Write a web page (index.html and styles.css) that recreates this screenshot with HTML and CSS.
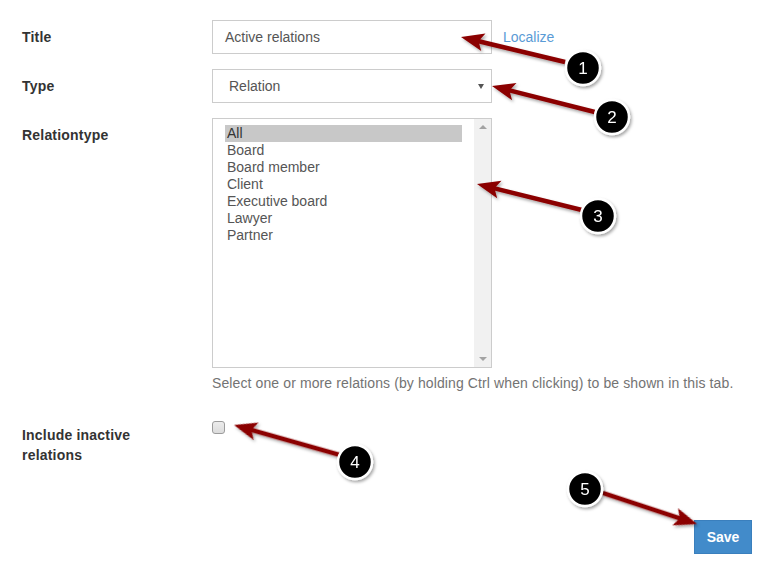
FILE: index.html
```html
<!DOCTYPE html>
<html>
<head>
<meta charset="utf-8">
<link rel="stylesheet" href="styles.css">
</head>
<body>
<div class="page">
  <form class="form">
    <div class="row">
      <div class="label">Title</div>
      <div class="field field-inline">
        <div class="input">Active relations</div>
        <a class="link" href="#">Localize</a>
      </div>
    </div>
    <div class="row">
      <div class="label">Type</div>
      <div class="field">
        <div class="input select">Relation<span class="caret"></span></div>
      </div>
    </div>
    <div class="row">
      <div class="label">Relationtype</div>
      <div class="field">
        <div class="listbox">
          <div class="options">
            <div class="option selected">All</div>
            <div class="option">Board</div>
            <div class="option">Board member</div>
            <div class="option">Client</div>
            <div class="option">Executive board</div>
            <div class="option">Lawyer</div>
            <div class="option">Partner</div>
          </div>
          <div class="scrollbar">
            <span class="sb-up"></span>
            <span class="sb-down"></span>
          </div>
        </div>
        <div class="help">Select one or more relations (by holding Ctrl when clicking) to be shown in this tab.</div>
      </div>
    </div>
    <div class="row row-check">
      <div class="label">Include inactive<br>relations</div>
      <div class="field">
        <span class="checkbox"></span>
      </div>
    </div>
    <div class="actions">
      <button type="button" class="btn">Save</button>
    </div>
  </form>

  <svg class="overlay" width="782" height="585" viewBox="0 0 782 585">
    <defs>
      <filter id="sh" x="-30%" y="-30%" width="160%" height="160%">
        <feDropShadow dx="1.5" dy="2" stdDeviation="1.5" flood-color="#000" flood-opacity="0.35"/>
      </filter>
    </defs>
    <g filter="url(#sh)">
      <g transform="translate(461 37) rotate(13.5)"><line x1="15" y1="0" x2="107" y2="0" stroke="#8b0000" stroke-width="4.5"/><path d="M0,0 L23,-9 L18,0 L23,9 Z" fill="#8b0000"/></g>
      <g transform="translate(492 86) rotate(14.2)"><line x1="15" y1="0" x2="106" y2="0" stroke="#8b0000" stroke-width="4.5"/><path d="M0,0 L23,-9 L18,0 L23,9 Z" fill="#8b0000"/></g>
      <g transform="translate(477 184) rotate(13.9)"><line x1="15" y1="0" x2="108" y2="0" stroke="#8b0000" stroke-width="4.5"/><path d="M0,0 L23,-9 L18,0 L23,9 Z" fill="#8b0000"/></g>
      <g transform="translate(234 425) rotate(15.8)"><line x1="15" y1="0" x2="110" y2="0" stroke="#8b0000" stroke-width="4.5"/><path d="M0,0 L23,-9 L18,0 L23,9 Z" fill="#8b0000"/></g>
      <g transform="translate(697 524) rotate(198.25)"><line x1="15" y1="0" x2="99" y2="0" stroke="#8b0000" stroke-width="4.5"/><path d="M0,0 L23,-9 L18,0 L23,9 Z" fill="#8b0000"/></g>
    </g>
    <g class="badges" filter="url(#sh)">
      <circle cx="583" cy="68" r="17" fill="#000" stroke="#fff" stroke-width="2.5"/>
      <circle cx="612" cy="117" r="17" fill="#000" stroke="#fff" stroke-width="2.5"/>
      <circle cx="598" cy="216" r="17" fill="#000" stroke="#fff" stroke-width="2.5"/>
      <circle cx="355" cy="462" r="17" fill="#000" stroke="#fff" stroke-width="2.5"/>
      <circle cx="585" cy="489" r="17" fill="#000" stroke="#fff" stroke-width="2.5"/>
    </g>
    <g class="nums">
      <text x="583" y="74">1</text>
      <text x="612" y="123">2</text>
      <text x="598" y="222">3</text>
      <text x="355" y="468">4</text>
      <text x="585" y="495">5</text>
    </g>
  </svg>
</div>
</body>
</html>
```
FILE: styles.css
```css
html, body {
  margin: 0;
  padding: 0;
  background: #fff;
}
body {
  font-family: "Liberation Sans", Arial, sans-serif;
  font-size: 14px;
  color: #333;
}
.page {
  position: relative;
  width: 782px;
  height: 585px;
  overflow: hidden;
}
.form {
  padding: 20px 0 0 22px;
  margin: 0;
}
.row {
  display: flex;
  margin-bottom: 15px;
}
.label {
  width: 190px;
  flex: none;
  padding-top: 7px;
  line-height: 20px;
  font-weight: bold;
  font-size: 14px;
  letter-spacing: 0.2px;
  color: #333;
}
.field {
  flex: none;
}
.field-inline {
  display: flex;
  align-items: center;
  gap: 11px;
}
.input {
  box-sizing: border-box;
  width: 280px;
  height: 34px;
  border: 1px solid #ccc;
  padding: 0 12px;
  line-height: 32px;
  color: #555;
  font-size: 14px;
  background: #fff;
}
.select {
  position: relative;
  padding-left: 16px;
}
.caret {
  position: absolute;
  right: 7px;
  top: 14px;
  width: 0;
  height: 0;
  border-left: 3px solid transparent;
  border-right: 3px solid transparent;
  border-top: 5px solid #555;
}
.link {
  color: #5a9bd6;
  text-decoration: none;
  font-size: 14px;
}
.listbox {
  box-sizing: border-box;
  width: 280px;
  height: 250px;
  border: 1px solid #ccc;
  display: flex;
  background: #fff;
}
.options {
  flex: 1;
  padding: 6px 12px 0 12px;
}
.option {
  line-height: 17px;
  height: 17px;
  padding-left: 2px;
  color: #555;
  font-size: 14px;
}
.option.selected {
  background: #c8c8c8;
  color: #333;
}
.scrollbar {
  position: relative;
  width: 17px;
  flex: none;
  background: #f1f1f1;
}
.sb-up, .sb-down {
  position: absolute;
  left: 5px;
  width: 0;
  height: 0;
  border-left: 4px solid transparent;
  border-right: 4px solid transparent;
}
.sb-up {
  top: 6px;
  border-bottom: 4px solid #a3a3a3;
}
.sb-down {
  bottom: 6px;
  border-top: 4px solid #a3a3a3;
}
.help {
  margin-top: 5px;
  line-height: 20px;
  color: #737373;
  font-size: 14px;
  letter-spacing: 0.11px;
  white-space: nowrap;
}
.row-check {
  margin-top: 32px;
}
.row-check .label {
  padding-top: 0;
}
.checkbox {
  display: block;
  box-sizing: border-box;
  width: 13px;
  height: 13px;
  margin-top: -4px;
  border: 1px solid #9c9c9c;
  border-radius: 3px;
  background: linear-gradient(#ececec, #dcdcdc);
}
.actions {
  display: flex;
  justify-content: flex-end;
  padding-right: 30px;
  margin-top: 55px;
}
.btn {
  box-sizing: border-box;
  width: 58px;
  height: 34px;
  border: 1px solid #3a7fbd;
  background: #428bca;
  color: #fff;
  font-family: "Liberation Sans", Arial, sans-serif;
  font-size: 14px;
  font-weight: bold;
  padding: 0;
  border-radius: 0;
}
.overlay {
  position: absolute;
  left: 0;
  top: 0;
  pointer-events: none;
}
.nums text {
  font-family: "Liberation Sans", Arial, sans-serif;
  font-size: 17px;
  fill: #fff;
  text-anchor: middle;
}
```
